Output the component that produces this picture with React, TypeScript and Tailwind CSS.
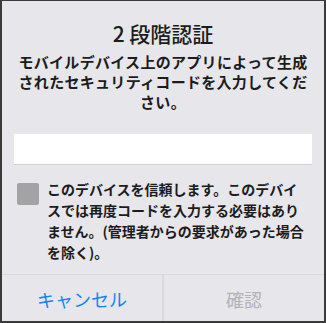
import React from "react";

export default function App() {
  const jp = { fontFamily: '"Noto Sans CJK JP", "Noto Sans", sans-serif' };
  return (
    <div
      style={jp}
      className="w-[326px] h-[323px] box-border border-2 border-t-[1px] border-[#3a3a3a] bg-[#e6e6eb] flex flex-col text-[#1c1c1c]"
    >
      <div className="pt-[18px] text-center text-[21px] leading-[28px] font-medium">2 段階認証</div>
      <div className="mt-[5px] text-center text-[15px] leading-[20px] font-bold tracking-[0.3px]">
        モバイルデバイス上のアプリによって生成
        <br />
        されたセキュリティコードを入力してくだ
        <br />
        さい。
      </div>
      <div className="mt-[22px] mx-[12px] h-[31px] bg-white border-b border-[#cfcfd4]" />
      <div className="mt-[14px] flex items-start pl-[15px] gap-[8px]">
        <div className="mt-[4px] w-[22px] h-[22px] rounded-[2px] bg-[#a3a3a6] shrink-0" />
        <div className="text-[14px] leading-[21px] font-bold">
          このデバイスを信頼します。このデバイ
          <br />
          スでは再度コードを入力する必要はあり
          <br />
          ません。(管理者からの要求があった場合
          <br />
          を除く)。
        </div>
      </div>
      <div className="mt-auto h-[47px] border-t border-[#d9d9de] flex">
        <div className="flex-1 flex items-center justify-center pt-[2px] text-[18px] text-[#1a82f0]">キャンセル</div>
        <div className="w-[2px] bg-[#d9d9de]" />
        <div className="flex-1 flex items-center justify-center pt-[2px] text-[18px] text-[#b3b3b8]">確認</div>
      </div>
    </div>
  );
}
